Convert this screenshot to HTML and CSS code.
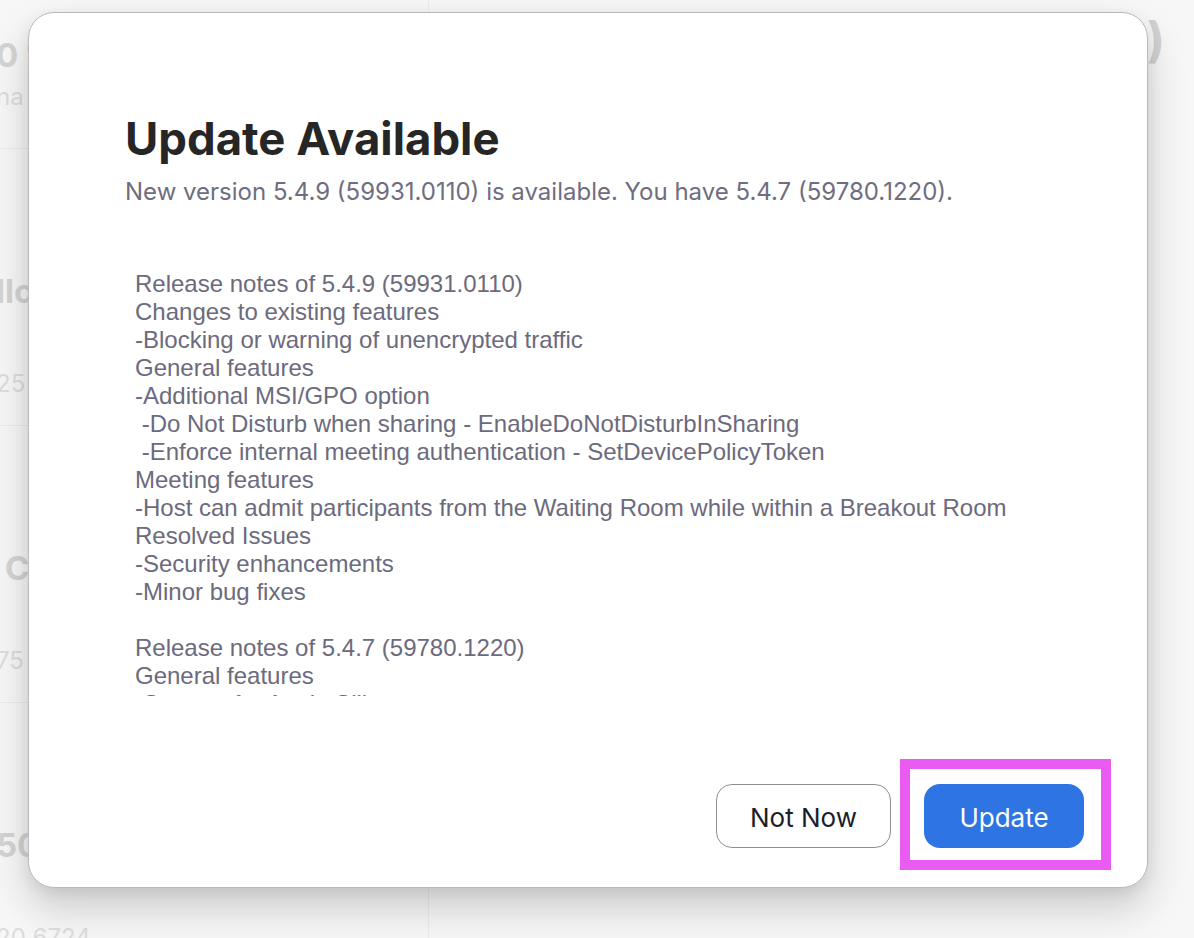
FILE: index.html
```html
<!DOCTYPE html>
<html lang="en">
<head>
<meta charset="utf-8">
<title>Update Available</title>
<link rel="stylesheet" href="styles.css">
</head>
<body>
<div class="app">
  <aside class="sidebar">
    <div class="item first">
      <div class="item-title">0 1</div>
      <div class="item-sub">na</div>
    </div>
    <div class="item">
      <div class="item-title">llo</div>
      <div class="item-sub">25</div>
    </div>
    <div class="item">
      <div class="item-title item-title-indent">C</div>
      <div class="item-sub">75</div>
    </div>
    <div class="item">
      <div class="item-title">50</div>
      <div class="item-sub">20 6724</div>
    </div>
  </aside>
  <main class="main">
    <div class="main-head">(0)</div>
  </main>
</div>

<div class="dialog" role="dialog" aria-labelledby="dlg-title">
  <header class="dialog-head">
    <h1 id="dlg-title" class="dialog-title">Update Available</h1>
    <p class="dialog-sub">New version 5.4.9 (59931.0110) is available. You have 5.4.7 (59780.1220).</p>
  </header>
  <div class="notes">
    <div class="notes-text">Release notes of 5.4.9 (59931.0110)
Changes to existing features
-Blocking or warning of unencrypted traffic
General features
-Additional MSI/GPO option
 -Do Not Disturb when sharing - EnableDoNotDisturbInSharing
 -Enforce internal meeting authentication - SetDevicePolicyToken
Meeting features
-Host can admit participants from the Waiting Room while within a Breakout Room
Resolved Issues
-Security enhancements
-Minor bug fixes

Release notes of 5.4.7 (59780.1220)
General features
-Support for Apple Silicon
-Minor bug fixes</div>
  </div>
  <footer class="dialog-foot">
    <button class="btn btn-secondary" type="button">Not Now</button>
    <div class="highlight">
      <button class="btn btn-primary" type="button">Update</button>
    </div>
  </footer>
</div>
</body>
</html>
```

FILE: styles.css
```css
* {
  box-sizing: border-box;
}

html, body {
  margin: 0;
  padding: 0;
}

body {
  width: 1194px;
  height: 938px;
  overflow: hidden;
  background: #f7f7f7;
  font-family: "Inter", "Liberation Sans", sans-serif;
  position: relative;
}

/* background app (dimmed behind the dialog) */
.app {
  display: flex;
  height: 938px;
}

.sidebar {
  width: 433px;
  margin-left: -4px;
  border-right: 1px solid #ececec;
  display: flex;
  flex-direction: column;
  flex-shrink: 0;
}

.item {
  height: 277px;
  padding-top: 118px;
  border-bottom: 1px solid #ececec;
  flex-shrink: 0;
}

.item.first {
  height: 149px;
  padding-top: 31px;
}

.item-title {
  font-size: 33px;
  font-weight: 700;
  line-height: 48px;
  color: #d4d4d4;
}

.item-title-indent {
  padding-left: 9px;
}

.item-sub {
  font-size: 24px;
  line-height: 36px;
  margin-top: 51px;
  color: #dddddd;
}

.item.first .item-sub {
  margin-top: 0;
}

.main {
  flex: 1;
  display: flex;
  justify-content: flex-end;
}

.main-head {
  font-size: 48px;
  font-weight: 700;
  color: #d2d2d2;
  line-height: 60px;
  margin-top: 12px;
  margin-right: 29px;
}

/* dialog */
.dialog {
  position: absolute;
  top: 12px;
  left: 28px;
  width: 1120px;
  height: 876px;
  background: #ffffff;
  border: 1px solid #bababa;
  border-radius: 26px;
  box-shadow: 0 20px 40px rgba(0, 0, 0, 0.18), 0 4px 14px rgba(0, 0, 0, 0.07);
  display: flex;
  flex-direction: column;
  padding: 0 36px 17px 96px;
}

.dialog-head {
  padding-top: 99px;
}

.dialog-title {
  margin: 0;
  font-family: "Inter", sans-serif;
  font-weight: 700;
  font-size: 45.5px;
  line-height: 54px;
  color: #262626;
}

.dialog-sub {
  margin: 12px 0 0;
  font-family: "Inter", sans-serif;
  font-size: 24px;
  line-height: 28px;
  color: #6f6d80;
}

.notes {
  margin-top: 64px;
  margin-left: 10px;
  height: 426px;
  overflow: hidden;
}

.notes-text {
  white-space: pre;
  font-family: "Liberation Sans", Arial, sans-serif;
  font-size: 24px;
  line-height: 28px;
  color: #6c6a7d;
}

.dialog-foot {
  margin-top: auto;
  display: flex;
  justify-content: flex-end;
  align-items: flex-start;
}

.btn {
  height: 64px;
  border-radius: 16px;
  font-family: "Inter", sans-serif;
  font-size: 26px;
  font-weight: 400;
  padding: 3px 0 0;
  cursor: pointer;
}

.btn-secondary {
  width: 175px;
  margin-top: 25px;
  margin-right: 9px;
  background: #ffffff;
  border: 1.5px solid #8e8e93;
  color: #1d1d29;
}

.highlight {
  border: 10px solid #ea5cf1;
  padding: 15px 17px 12px 14px;
}

.btn-primary {
  display: block;
  width: 160px;
  background: #2e74e3;
  border: none;
  color: #ffffff;
}
```
